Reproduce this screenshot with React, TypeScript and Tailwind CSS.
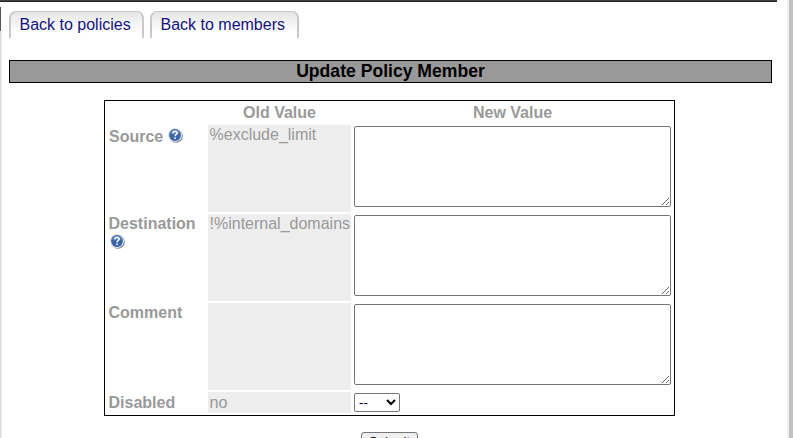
import React from "react";

function Tab({ label, width }: { label: string; width: string }) {
  return (
    <a
      className={`${width} block h-[27px] whitespace-nowrap rounded-t-[7px] border-x-2 border-t border-[#c8c8c8] bg-gradient-to-b from-[#e6e6e6] to-white to-80% pl-[8.5px] text-[16px] leading-[26px] text-[#14147d]`}
    >
      {label}
    </a>
  );
}

function HelpIcon() {
  return (
    <svg width="16" height="16" viewBox="0 0 16 16" className="block shrink-0">
      <circle cx="8.9" cy="8.9" r="6.9" fill="#777c84" />
      <circle cx="8" cy="8" r="7.1" fill="#dfe3ea" />
      <circle cx="8" cy="8" r="5.9" fill="#3b63a8" />
      <path d="M3.2 6.5A5.1 5.1 0 0 1 12.8 6.5Q8 8.5 3.2 6.5Z" fill="#6287c0" />
      <path
        d="M5.9 6.2C6 3.7 10.2 3.8 10.1 6.1C10 7.6 8.2 7.5 8.1 9.3"
        fill="none"
        stroke="#fff"
        strokeWidth="1.5"
      />
      <rect x="7.3" y="10.4" width="1.6" height="1.6" fill="#fff" />
    </svg>
  );
}

function OldValue({ children }: { children?: React.ReactNode }) {
  return (
    <div className="whitespace-nowrap bg-[#ededed] pl-[1.5px] pt-px leading-[18px]">{children}</div>
  );
}

function NewValue({ label }: { label: string }) {
  return (
    <div className="pl-px pt-px">
      <textarea
        aria-label={label}
        className="block h-[81px] w-[317px] resize rounded-[2px] border border-[#767676] bg-white"
      />
    </div>
  );
}

export default function App() {
  return (
    <div className="flex h-[438px] w-[793px] overflow-hidden bg-white font-['Liberation_Sans',Arial,sans-serif] text-[16px]">
      <div className="flex w-[2px] shrink-0 flex-col">
        <div className="h-[2px] border-b border-[#231f20] bg-[#444]" />
        <div className="h-[5px]" />
        <div className="h-6 w-px bg-[#555]" />
        <div className="grow border-r border-[#ececec] bg-[#dcdcdc]" />
      </div>
      <div className="w-[785px] shrink-0">
        <div className="h-[2px] w-[775px] border-b border-[#231f20] bg-[#444]" />
        <div className="ml-[7px] mt-[9px] flex gap-[6px]">
          <Tab label="Back to policies" width="w-[135px]" />
          <Tab label="Back to members" width="w-[149px]" />
        </div>
        <h1 className="ml-[7px] mt-[22px] h-[23px] w-[763px] border border-black bg-[#999] text-center text-[17.6px] font-bold leading-[21px] text-black">
          Update Policy Member
        </h1>
        <div className="ml-[102px] mt-[17px] grid h-[316px] w-[571px] grid-cols-[99px_143px_319px] grid-rows-[20px_87px_87px_87px_21px] gap-[2px] border border-black p-[2px] text-[#999]">
          <div />
          <div className="text-center font-bold leading-[19px]">Old Value</div>
          <div className="text-center font-bold leading-[19px]">New Value</div>

          <div className="flex items-start pl-[2px] pt-[2px] font-bold leading-[18px]">
            <span className="mr-1 pt-px">Source</span>
            <HelpIcon />
          </div>
          <OldValue>%exclude_limit</OldValue>
          <NewValue label="Source" />

          <div className="pl-[1.5px] font-bold leading-[18px]">
            <div className="pt-px">Destination</div>
            <HelpIcon />
          </div>
          <OldValue>!%internal_domains</OldValue>
          <NewValue label="Destination" />

          <div className="pl-[1.5px] pt-px font-bold leading-[18px]">Comment</div>
          <OldValue />
          <NewValue label="Comment" />

          <div className="pl-[1.5px] pt-[2px] font-bold leading-[18px]">Disabled</div>
          <OldValue>
            <span className="block pt-px">no</span>
          </OldValue>
          <div className="pl-px pt-px">
            <select
              aria-label="Disabled"
              className="block h-[19px] w-[46px] rounded-[2px] border border-[#767676] bg-white text-[13.333px] text-black"
            >
              <option>--</option>
              <option>yes</option>
              <option>no</option>
            </select>
          </div>
        </div>
        <button className="ml-[359px] mt-4 flex h-[21px] w-[57px] items-start justify-center rounded-[3px] border border-[#767676] bg-[#efefef] pt-px text-[13.333px] leading-[15px] text-black">
          Submit
        </button>
      </div>
      <div className="w-[2px] shrink-0 bg-[#f1f1f1]" />
      <div className="w-1 shrink-0 bg-[#c1c1c1]" />
    </div>
  );
}
